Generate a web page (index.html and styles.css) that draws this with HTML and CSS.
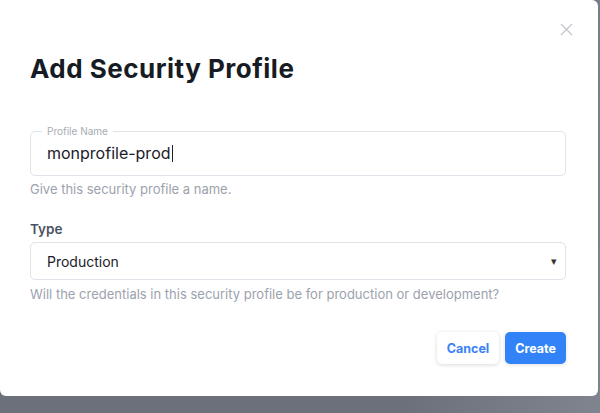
FILE: index.html
```html
<!DOCTYPE html>
<html>
<head>
<meta charset="utf-8">
<link rel="stylesheet" href="styles.css">
</head>
<body>
<div class="modal">
  <button class="close" aria-label="Close">
    <svg width="13" height="13" viewBox="0 0 13 13"><path d="M1 1L12 12M12 1L1 12" stroke="#c4c6cb" stroke-width="1.3" fill="none"/></svg>
  </button>
  <h1 class="title">Add Security Profile</h1>
  <div class="field">
    <div class="floating">
      <span class="float-label">Profile Name</span>
      <div class="input-text">monprofile-prod<span class="caret"></span></div>
    </div>
    <p class="help">Give this security profile a name.</p>
  </div>
  <div class="field type-field">
    <label class="label">Type</label>
    <div class="select">
      <span>Production</span>
      <span class="arrow">▾</span>
    </div>
    <p class="help help-type">Will the credentials in this security profile be for production or development?</p>
  </div>
  <div class="actions">
    <button class="btn btn-cancel">Cancel</button>
    <button class="btn btn-create">Create</button>
  </div>
</div>
</body>
</html>
```
FILE: styles.css
```css
html, body {
  margin: 0;
  padding: 0;
  width: 600px;
  height: 413px;
  overflow: hidden;
}
body {
  background: linear-gradient(100deg, #6b707b 0%, #6b707b 70%, #7f848e 100%);
  font-family: Inter, "Open Sans", sans-serif;
}
.modal {
  position: relative;
  width: 598px;
  height: 396px;
  box-sizing: border-box;
  background: #fff;
  border-radius: 0 6px 6px 6px;
  padding: 51px 32px 0 30px;
}
.close {
  position: absolute;
  top: 23px;
  right: 25px;
  background: none;
  border: 0;
  padding: 0;
  width: 13px;
  height: 13px;
}
.close svg { display: block; }
.title {
  margin: 0;
  font-size: 26px;
  font-weight: 700;
  color: #161b24;
  letter-spacing: 0.5px;
  line-height: 36px;
}
.field { margin-top: 44px; }
.floating {
  position: relative;
  border: 1px solid #e1e3ea;
  border-radius: 5px;
  height: 45px;
  box-sizing: border-box;
  padding: 10px 16px 0 16px;
}
.float-label {
  position: absolute;
  top: -7px;
  left: 11px;
  padding: 0 5px;
  background: #fff;
  font-size: 10px;
  line-height: 12px;
  color: #a6abb4;
}
.input-text {
  font-size: 16px;
  line-height: 22px;
  color: #1c2029;
  display: flex;
  align-items: center;
}
.caret {
  display: inline-block;
  width: 1px;
  height: 17px;
  background: #1c2029;
  margin-left: 1px;
}
.help {
  margin: 5px 0 0;
  font-size: 13px;
  line-height: 17px;
  color: #9ca2ad;
}
.help-type { margin-top: 6px; }
.type-field { margin-top: 22px; }
.label {
  display: block;
  font-size: 13.5px;
  font-weight: 600;
  color: #4a5261;
  line-height: 18px;
  margin-bottom: 4px;
}
.select {
  border: 1px solid #e1e3ea;
  border-radius: 5px;
  height: 38px;
  box-sizing: border-box;
  padding: 0 8px 0 16px;
  display: flex;
  align-items: center;
  justify-content: space-between;
  font-size: 14px;
  color: #1c2029;
}
.arrow {
  font-size: 11px;
  color: #333;
}
.actions {
  margin-top: 29px;
  display: flex;
  justify-content: flex-end;
  gap: 6px;
}
.btn {
  font-family: Inter, sans-serif;
  font-size: 12.5px;
  font-weight: 700;
  height: 32px;
  border-radius: 5px;
  border: 0;
  padding: 0 10px;
}
.btn-cancel {
  background: #fff;
  color: #3b82f6;
  box-shadow: 0 1px 4px rgba(0,0,0,0.15);
}
.btn-create {
  background: #3282f8;
  color: #fff;
  box-shadow: 0 1px 4px rgba(0,0,0,0.12);
}
```
